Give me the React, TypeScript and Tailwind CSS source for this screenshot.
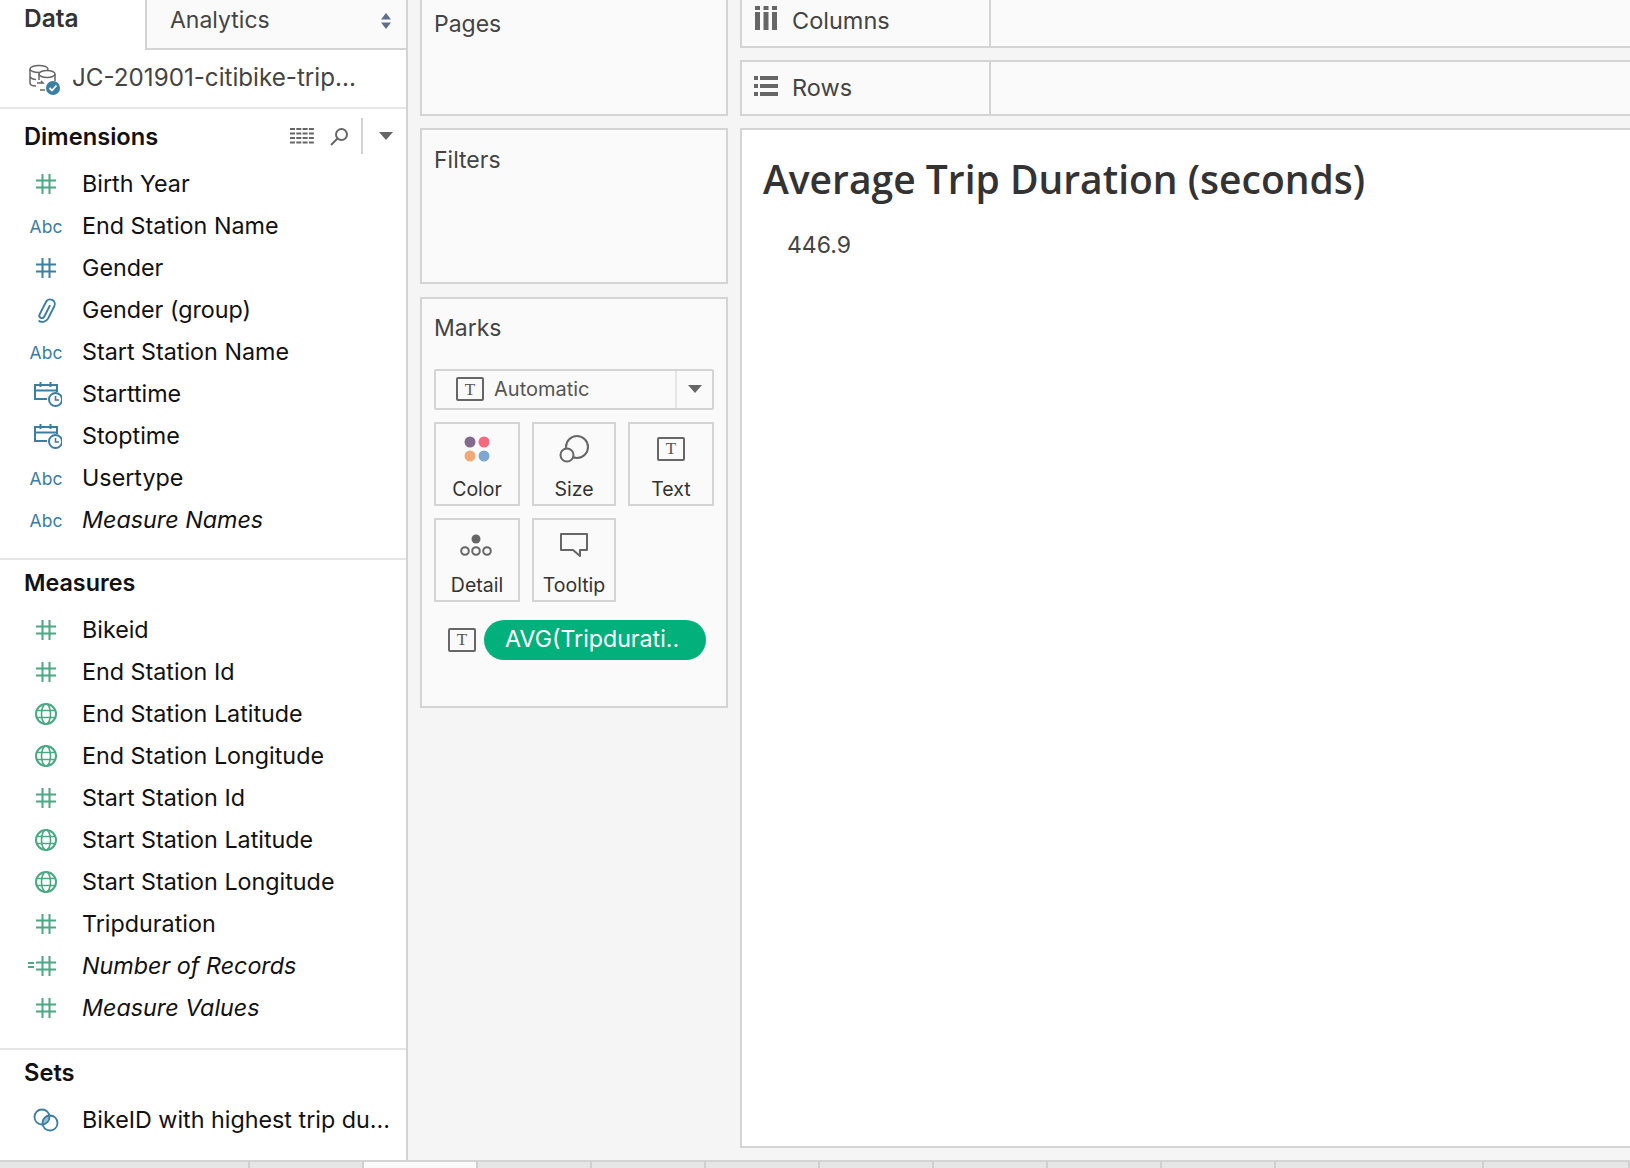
const SANS = 'font-["Inter","Liberation_Sans",sans-serif]';

const GREEN = '#4aa883';
const BLUE = '#3a7ea1';

type Kind = 'hash' | 'abc' | 'clip' | 'date' | 'globe' | 'calc' | 'set';

function Hash({ color }: { color: string }) {
  return (
    <svg width="20" height="20" viewBox="0 0 20 20" fill="none" stroke={color} strokeWidth="2">
      <path d="M0 6.5h20M0 13.5h20M6.5 0v20M13.5 0v20" />
    </svg>
  );
}

function FieldIcon({ kind, blue }: { kind: Kind; blue?: boolean }) {
  if (kind === 'hash') return <Hash color={blue ? BLUE : GREEN} />;
  if (kind === 'abc') return <span className="mt-[2px] text-[17.5px] leading-none text-[#3a7ea1]">Abc</span>;
  if (kind === 'clip')
    return (
      <svg className="mr-[2px]" width="25" height="29" viewBox="0 0 22 26" fill="none" stroke={BLUE} strokeWidth="1.7" strokeLinecap="round">
        <path d="M12.500 7.500v11a2.300 2.300 0 0 1-4.600 0V6a4.200 4.200 0 0 1 8.400 0v12.500a5.800 5.800 0 0 1-6 5.500" transform="rotate(27 11 13)" />
      </svg>
    );
  if (kind === 'date')
    return (
      <svg className="ml-[4px]" width="28" height="26" viewBox="0 0 28 26" fill="none" stroke={BLUE} strokeWidth="2">
        <path d="M13 18H1V4h22v7M1 9.5h22M6.500 1v5M16.500 1v5" />
        <circle cx="21.500" cy="18.500" r="6.500" fill="#fff" />
        <path d="M21.500 15v4H25" strokeWidth="1.6" />
      </svg>
    );
  if (kind === 'globe')
    return (
      <svg width="22" height="22" viewBox="0 0 22 22" fill="none" stroke={GREEN} strokeWidth="1.6">
        <circle cx="11" cy="11" r="10" strokeWidth="2" />
        <ellipse cx="11" cy="11" rx="4.5" ry="10" />
        <path d="M1.5 7.5h19M1.5 14.5h19" />
      </svg>
    );
  if (kind === 'calc')
    return (
      <span className="relative flex">
        <span className="absolute left-[-8px] top-[6px] flex flex-col gap-[2px]">
          <span className="block h-[2px] w-[6px] bg-[#4aa883]" />
          <span className="block h-[2px] w-[6px] bg-[#4aa883]" />
        </span>
        <Hash color={GREEN} />
      </span>
    );
  return (
    <svg width="26" height="24" viewBox="0 0 26 24" fill="none" stroke={BLUE} strokeWidth="1.8">
      <clipPath id="set-overlap">
        <circle cx="9" cy="9" r="7.500" />
      </clipPath>
      <circle cx="17" cy="15" r="7.500" fill="#9cc0d2" stroke="none" clipPath="url(#set-overlap)" />
      <circle cx="9" cy="9" r="7.500" />
      <circle cx="17" cy="15" r="7.500" />
    </svg>
  );
}

function Field({ label, kind, blue, italic }: { label: string; kind: Kind; blue?: boolean; italic?: boolean }) {
  return (
    <div className="flex h-[42px] items-center">
      <div className="flex w-[82px] shrink-0 justify-center pl-[10px]">
        <FieldIcon kind={kind} blue={blue} />
      </div>
      <span className={italic ? 'whitespace-nowrap text-[23.3px] italic text-[#111]' : 'whitespace-nowrap text-[23.3px] text-[#111]'}>{label}</span>
    </div>
  );
}

function TIcon({ w = 28, h = 24 }: { w?: number; h?: number }) {
  return (
    <span
      className="flex items-center justify-center rounded-[2px] border-2 border-[#666] font-['Liberation_Serif',serif] text-[17px] leading-none text-[#555]"
      style={{ width: w, height: h }}
    >
      T
    </span>
  );
}

function MarkCard({ label, children, w }: { label: string; children: React.ReactNode; w: string }) {
  return (
    <div className={`${w} flex h-[84px] flex-col items-center border-2 border-[#d4d4d4]`}>
      <div className="flex h-[50px] items-center justify-center">{children}</div>
      <span className="mt-[3px] text-[19.5px] leading-[24px] text-[#333]">{label}</span>
    </div>
  );
}

function Shelf({ icon, label, className, inner = '' }: { icon: React.ReactNode; label: string; className: string; inner?: string }) {
  return (
    <div className={`${className} flex border-y-2 border-l-2 border-[#d4d4d4] bg-[#fafafa]`}>
      <div className={`${inner} flex w-[249px] items-center border-r-2 border-[#d4d4d4]`}>
        <div className="flex w-[50px] justify-center">{icon}</div>
        <span className="text-[23.5px] text-[#444]">{label}</span>
      </div>
    </div>
  );
}

export default function App() {
  const tabStops = [250, 114, 114, 114, 114, 114, 114, 114, 114, 114, 208, 146];

  return (
    <div className={`${SANS} flex h-[1168px] w-[1630px] flex-col overflow-hidden bg-[#f5f5f5] text-[23px]`}>
      <div className="flex h-[1160px] min-h-0">
        {/* data pane */}
        <aside className="flex w-[408px] shrink-0 flex-col border-r-2 border-[#d4d4d4] bg-white">
          <div className="flex h-[50px] shrink-0">
            <div className="w-[145px] pl-[24px] text-[24.5px] font-semibold text-[#333]">Data</div>
            <div className="flex flex-1 items-start justify-between border-b-2 border-l-2 border-[#d4d4d4] bg-[#fafafa] pl-[23px] pr-[14px] pt-[3px] text-[#444]">
              <span>Analytics</span>
              <svg className="mt-[10px]" width="12" height="16" viewBox="0 0 12 16" fill="#5d6f8a">
                <path d="M6 0l5 6.5H1zM6 16l-5-6.5h10z" />
              </svg>
            </div>
          </div>
          <div className="flex h-[59px] shrink-0 items-center border-b-2 border-[#e6e6e6] pl-[28px]">
            <svg width="34" height="32" viewBox="0 0 34 32" fill="none" stroke="#666" strokeWidth="1.5">
              <ellipse cx="11" cy="6" rx="9" ry="3.5" />
              <path d="M2 6v14c0 1.500 2 3 6 3M2 13c0 2 3 3.500 6 3.500" />
              <ellipse cx="19" cy="11" rx="8" ry="3.5" fill="#fff" />
              <path d="M11 11v6M27 11v7M9 20h6l-2-2M12 27h5" />
              <circle cx="25" cy="25" r="7" fill="#3a7ea1" stroke="none" />
              <path d="M21.500 25l2.500 2.500 4.500-5" stroke="#fff" strokeWidth="1.8" />
            </svg>
            <span className="ml-[10px] text-[24.2px] text-[#444]">JC-201901-citibike-trip...</span>
          </div>

          <div className="flex h-[54px] shrink-0 items-center pl-[24px] pr-[13px]">
            <span className="mt-[2px] flex-1 text-[23.7px] font-semibold text-[#111]">Dimensions</span>
            <svg className="mr-[-1px]" width="24" height="18" viewBox="0 0 24 18" fill="none" stroke="#666" strokeWidth="2" strokeDasharray="5 1.300">
              <path d="M0 2h24M0 6.500h24M0 11h24M0 15.500h24" />
            </svg>
            <svg className="ml-[17px]" width="19" height="19" viewBox="0 0 19 19" fill="none" stroke="#666" strokeWidth="2">
              <circle cx="11.500" cy="7.500" r="5.500" />
              <path d="M7.500 11.500 1 18" />
            </svg>
            <span className="ml-[12px] h-[36px] w-[2px] bg-[#d4d4d4]" />
            <svg className="ml-[16px]" width="14" height="8" viewBox="0 0 14 8" fill="#666">
              <path d="M0 0h14L7 8z" />
            </svg>
          </div>
          <Field label="Birth Year" kind="hash" />
          <Field label="End Station Name" kind="abc" />
          <Field label="Gender" kind="hash" blue />
          <Field label="Gender (group)" kind="clip" />
          <Field label="Start Station Name" kind="abc" />
          <Field label="Starttime" kind="date" />
          <Field label="Stoptime" kind="date" />
          <Field label="Usertype" kind="abc" />
          <Field label="Measure Names" kind="abc" italic />

          <div className="mb-[3px] mt-[17px] flex h-[48px] shrink-0 items-center border-t-2 border-[#e6e6e6] pl-[24px] text-[23.3px] font-semibold text-[#111]">
            Measures
          </div>
          <Field label="Bikeid" kind="hash" />
          <Field label="End Station Id" kind="hash" />
          <Field label="End Station Latitude" kind="globe" />
          <Field label="End Station Longitude" kind="globe" />
          <Field label="Start Station Id" kind="hash" />
          <Field label="Start Station Latitude" kind="globe" />
          <Field label="Start Station Longitude" kind="globe" />
          <Field label="Tripduration" kind="hash" />
          <Field label="Number of Records" kind="calc" italic />
          <Field label="Measure Values" kind="hash" italic />

          <div className="mb-[3px] mt-[19px] flex h-[48px] shrink-0 items-center border-t-2 border-[#e6e6e6] pl-[24px] text-[23.7px] font-semibold text-[#111]">
            Sets
          </div>
          <Field label="BikeID with highest trip du..." kind="set" />
        </aside>

        {/* shelves column */}
        <div className="flex w-[320px] shrink-0 flex-col pl-[12px]">
          <section className="h-[116px] border-x-2 border-b-2 border-[#d4d4d4] bg-[#fafafa] pl-[12px] pt-[7px] text-[#444]">Pages</section>
          <section className="mt-[12px] h-[156px] border-2 border-[#d4d4d4] bg-[#fafafa] pl-[12px] pt-[13px] text-[#444]">Filters</section>
          <section className="mt-[13px] h-[411px] border-2 border-[#d4d4d4] bg-[#fafafa] px-[12px] pt-[12px]">
            <div className="text-[#444]">Marks</div>
            <div className="mt-[23px] flex h-[41px] items-stretch rounded-[2px] border-2 border-[#d4d4d4] text-[20px] text-[#555]">
              <div className="flex flex-1 items-center gap-[10px] border-r-2 border-[#e6e6e6] pl-[20px]">
                <TIcon />
                <span>Automatic</span>
              </div>
              <div className="flex w-[35px] items-center justify-center">
                <svg width="14" height="8" viewBox="0 0 14 8" fill="#666">
                  <path d="M0 0h14L7 8z" />
                </svg>
              </div>
            </div>
            <div className="mt-[12px] flex gap-[12px]">
              <MarkCard label="Color" w="w-[86px]">
                <svg width="26" height="26" viewBox="0 0 26 26">
                  <circle cx="6" cy="6" r="5.500" fill="#84698f" />
                  <circle cx="20" cy="6" r="5.500" fill="#f6697f" />
                  <circle cx="6" cy="20" r="5.500" fill="#f2a97a" />
                  <circle cx="20" cy="20" r="5.500" fill="#7fa8cf" />
                </svg>
              </MarkCard>
              <MarkCard label="Size" w="w-[84px]">
                <svg width="30" height="28" viewBox="0 0 30 28" fill="none" stroke="#666" strokeWidth="2">
                  <circle cx="18" cy="12" r="11" />
                  <circle cx="8" cy="20" r="6.500" fill="#fafafa" />
                </svg>
              </MarkCard>
              <MarkCard label="Text" w="w-[86px]">
                <TIcon />
              </MarkCard>
            </div>
            <div className="mt-[12px] flex gap-[12px]">
              <MarkCard label="Detail" w="w-[86px]">
                <svg className="mr-[2px]" width="32" height="22" viewBox="0 0 32 22" fill="none" stroke="#666" strokeWidth="2">
                  <circle cx="16" cy="5" r="4.500" fill="#666" stroke="none" />
                  <circle cx="5" cy="17" r="3.800" />
                  <circle cx="16" cy="17" r="3.800" />
                  <circle cx="27" cy="17" r="3.800" />
                </svg>
              </MarkCard>
              <MarkCard label="Tooltip" w="w-[84px]">
                <svg width="28" height="26" viewBox="0 0 28 26" fill="none" stroke="#666" strokeWidth="2" strokeLinejoin="round">
                  <path d="M1 2h26v16h-7v6l-7-6H1z" />
                </svg>
              </MarkCard>
            </div>
            <div className="mt-[18px] flex items-center pl-[14px]">
              <TIcon />
              <span className="ml-[8px] flex h-[40px] w-[222px] items-center rounded-full bg-[#02b07c] pl-[21px] text-[23.2px] text-white">AVG(Tripdurati..</span>
            </div>
          </section>
        </div>

        {/* worksheet */}
        <div className="flex min-w-0 flex-1 flex-col pl-[12px]">
          <Shelf
            className="h-[48px] border-t-0"
            inner="pb-[4px]"
            label="Columns"
            icon={
              <svg className="mb-[6px] mr-[2px]" width="22" height="24" viewBox="0 0 22 24" fill="#666">
                <path d="M0 0h5v4H0zM8.500 0h5v4h-5zM17 0h5v4h-5zM0 6h5v18H0zM8.500 6h5v18h-5zM17 6h5v18h-5z" />
              </svg>
            }
          />
          <Shelf
            className="mt-[12px] h-[56px]"
            label="Rows"
            icon={
              <svg className="mb-[4px] mr-[2px]" width="24" height="20" viewBox="0 0 24 20" fill="#666">
                <path d="M0 0h4v4H0zM6 0h18v4H6zM0 8h4v4H0zM6 8h18v4H6zM0 16h4v4H0zM6 16h18v4H6z" />
              </svg>
            }
          />
          <main className="mt-[12px] h-[1020px] border-y-2 border-l-2 border-[#d4d4d4] bg-white pl-[21px] pt-[21px]">
            <h1 className="font-['Open_Sans',sans-serif] text-[39px] font-semibold leading-[56px] text-[#333]">Average Trip Duration (seconds)</h1>
            <p className="ml-[24px] mt-[21px] text-[#444]">446.9</p>
          </main>
        </div>
      </div>

      {/* sheet tabs */}
      <div className="flex h-[8px] shrink-0 border-t-2 border-[#d4d4d4] bg-[#e6e6e6]">
        {tabStops.map((w, i) => (
          <div
            key={i}
            className={i === 2 ? 'border-r-2 border-[#cfcfcf] bg-[#fafafa]' : 'border-r-2 border-[#cfcfcf]'}
            style={{ width: w }}
          />
        ))}
      </div>
    </div>
  );
}
